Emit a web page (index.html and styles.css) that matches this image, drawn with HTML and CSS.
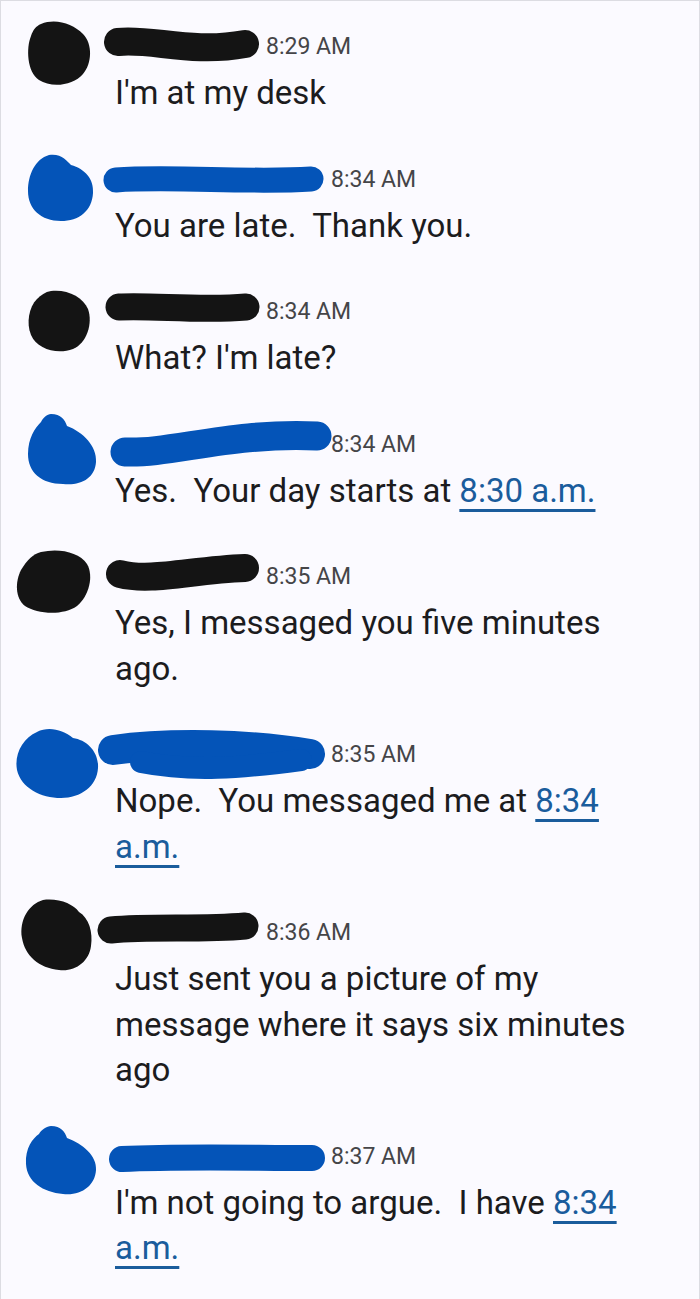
FILE: index.html
```html
<!DOCTYPE html>
<html>
    <head>
        <meta name="viewport" content="width=device-width, initial-scale=1" />
        <title>Messages</title>
        <link rel="stylesheet" href="styles.css">
    </head>
    <body>
        <div class="page">
            <div class="msg">
                <div class="head">
                    <svg class="redact short" viewBox="0 0 262 34">
                        <path class="ink-black" d="M40 -6 C55 -12 72 -6 82 4 C92 14 91 34 82 44 C72 56 50 58 38 50 C26 42 25 18 30 6 C32 0 35 -4 40 -6 Z"/>
                        <path class="bar-black" d="M117 12 C150 8 190 24 244 14" stroke-width="28"/>
                    </svg>
                    <span class="time">8:29 AM</span>
                </div>
                <p class="text">I'm at my desk</p>
            </div>
            <div class="msg">
                <div class="head">
                    <svg class="redact long" viewBox="0 0 327 34">
                        <path class="ink-blue" d="M48 -8 C60 -10 66 -2 70 2 C84 6 93 16 92 30 C91 48 78 58 60 58 C40 58 27 46 27 28 C27 12 34 -4 48 -8 Z"/>
                        <path class="bar-blue" d="M115 17 C170 13 250 20 310 16" stroke-width="25"/>
                    </svg>
                    <span class="time">8:34 AM</span>
                </div>
                <p class="text">You are late.&nbsp; Thank you.</p>
            </div>
            <div class="msg">
                <div class="head">
                    <svg class="redact short" viewBox="0 0 262 34">
                        <path class="ink-black" d="M50 -4 C66 -6 82 2 87 14 C92 28 86 48 72 54 C56 60 36 54 30 40 C25 28 28 12 36 4 C40 0 44 -3 50 -4 Z"/>
                        <path class="bar-black" d="M118 12 C150 10 200 16 245 12" stroke-width="27"/>
                    </svg>
                    <span class="time">8:34 AM</span>
                </div>
                <p class="text">What? I'm late?</p>
            </div>
            <div class="msg">
                <div class="head">
                    <svg class="redact long" viewBox="0 0 327 34">
                        <path class="ink-blue" d="M50 -14 C60 -14 64 -8 66 -2 C82 4 96 18 95 34 C94 50 80 58 62 56 C40 56 27 44 27 26 C27 10 34 0 40 -6 C42 -10 46 -14 50 -14 Z"/>
                        <path class="bar-blue" d="M124 24 C170 26 230 4 316 8" stroke-width="29"/>
                    </svg>
                    <span class="time">8:34 AM</span>
                </div>
                <p class="text">Yes.&nbsp; Your day starts at <a href="#">8:30 a.m.</a></p>
            </div>
            <div class="msg">
                <div class="head">
                    <svg class="redact short" viewBox="0 0 262 34">
                        <path class="ink-black" d="M40 -8 C58 -12 78 -8 86 4 C93 16 88 36 76 46 C62 56 36 54 24 46 C14 38 14 22 20 10 C26 0 32 -6 40 -8 Z"/>
                        <path class="bar-black" d="M119 14 C150 22 190 10 244 8" stroke-width="28"/>
                    </svg>
                    <span class="time">8:35 AM</span>
                </div>
                <p class="text">Yes, I messaged you five minutes ago.</p>
            </div>
            <div class="msg">
                <div class="head">
                    <svg class="redact long" viewBox="0 0 327 34">
                        <path class="ink-blue" d="M36 -6 C48 -12 62 -8 72 0 C86 2 98 14 97 30 C96 48 80 60 60 60 C40 60 20 50 16 32 C13 16 22 0 36 -6 Z"/>
                        <path class="bar-blue" d="M112 12 C170 4 250 6 309 16" stroke-width="30"/>
                        <path class="bar-blue" d="M140 24 C190 34 240 30 300 22" stroke-width="22"/>
                    </svg>
                    <span class="time">8:35 AM</span>
                </div>
                <p class="text">Nope.&nbsp; You messaged me at <a href="#">8:34 a.m.</a></p>
            </div>
            <div class="msg">
                <div class="head">
                    <svg class="redact short" viewBox="0 0 262 34">
                        <path class="ink-black" d="M42 -16 C58 -18 72 -12 78 -4 C88 2 92 16 90 30 C88 46 74 56 58 54 C38 52 24 40 21 22 C18 4 28 -12 42 -16 Z"/>
                        <path class="bar-black" d="M110 14 C150 10 200 14 244 10" stroke-width="27"/>
                    </svg>
                    <span class="time">8:36 AM</span>
                </div>
                <p class="text">Just sent you a picture of my message where it says six minutes ago</p>
            </div>
            <div class="msg">
                <div class="head">
                    <svg class="redact long" viewBox="0 0 327 34">
                        <path class="ink-blue" d="M50 -14 C60 -14 64 -8 66 -2 C82 4 96 16 95 30 C94 46 80 56 62 54 C42 52 26 42 25 24 C24 8 32 -2 38 -6 C40 -10 46 -14 50 -14 Z"/>
                        <path class="bar-blue" d="M121 19 C180 16 250 18 311 18" stroke-width="26"/>
                    </svg>
                    <span class="time">8:37 AM</span>
                </div>
                <p class="text">I'm not going to argue.&nbsp; I have <a href="#">8:34 a.m.</a></p>
            </div>
        </div>
    </body>
</html>
```
FILE: styles.css
```css
body {
    margin: 0px;
    background: #fbfaff;
}
.page {
    box-sizing: border-box;
    min-height: 1299px;
    border: 1px solid #dcdce2;
    background: #fbfaff;
    padding: 29px 0px 40px 0px;
    display: flex;
    flex-direction: column;
    gap: 47px;
    font-family: Roboto, "Noto Sans", Arial, sans-serif;
}
.msg {
    display: flex;
    flex-direction: column;
    gap: 6px;
}
.head {
    display: flex;
    align-items: center;
    height: 34px;
    gap: 3px;
}
.redact {
    flex: none;
    height: 34px;
    overflow: visible;
}
.redact.short {
    width: 262px;
}
.redact.long {
    width: 327px;
}
.ink-black {
    fill: #141414;
}
.ink-blue {
    fill: #0454b8;
}
.bar-black, .bar-blue {
    fill: none;
    stroke-linecap: round;
    stroke-linejoin: round;
}
.bar-black {
    stroke: #141414;
}
.bar-blue {
    stroke: #0454b8;
}
.time {
    color: #454548;
    font-size: 23px;
    line-height: 34px;
    white-space: nowrap;
}
.text {
    margin: 0px 0px 0px 114px;
    width: 535px;
    color: #1c1c1e;
    font-size: 33px;
    line-height: 45.5px;
}
.text a {
    color: #1a5c9c;
    text-decoration: underline;
    text-decoration-thickness: 3px;
    text-underline-offset: 7px;
}
```
